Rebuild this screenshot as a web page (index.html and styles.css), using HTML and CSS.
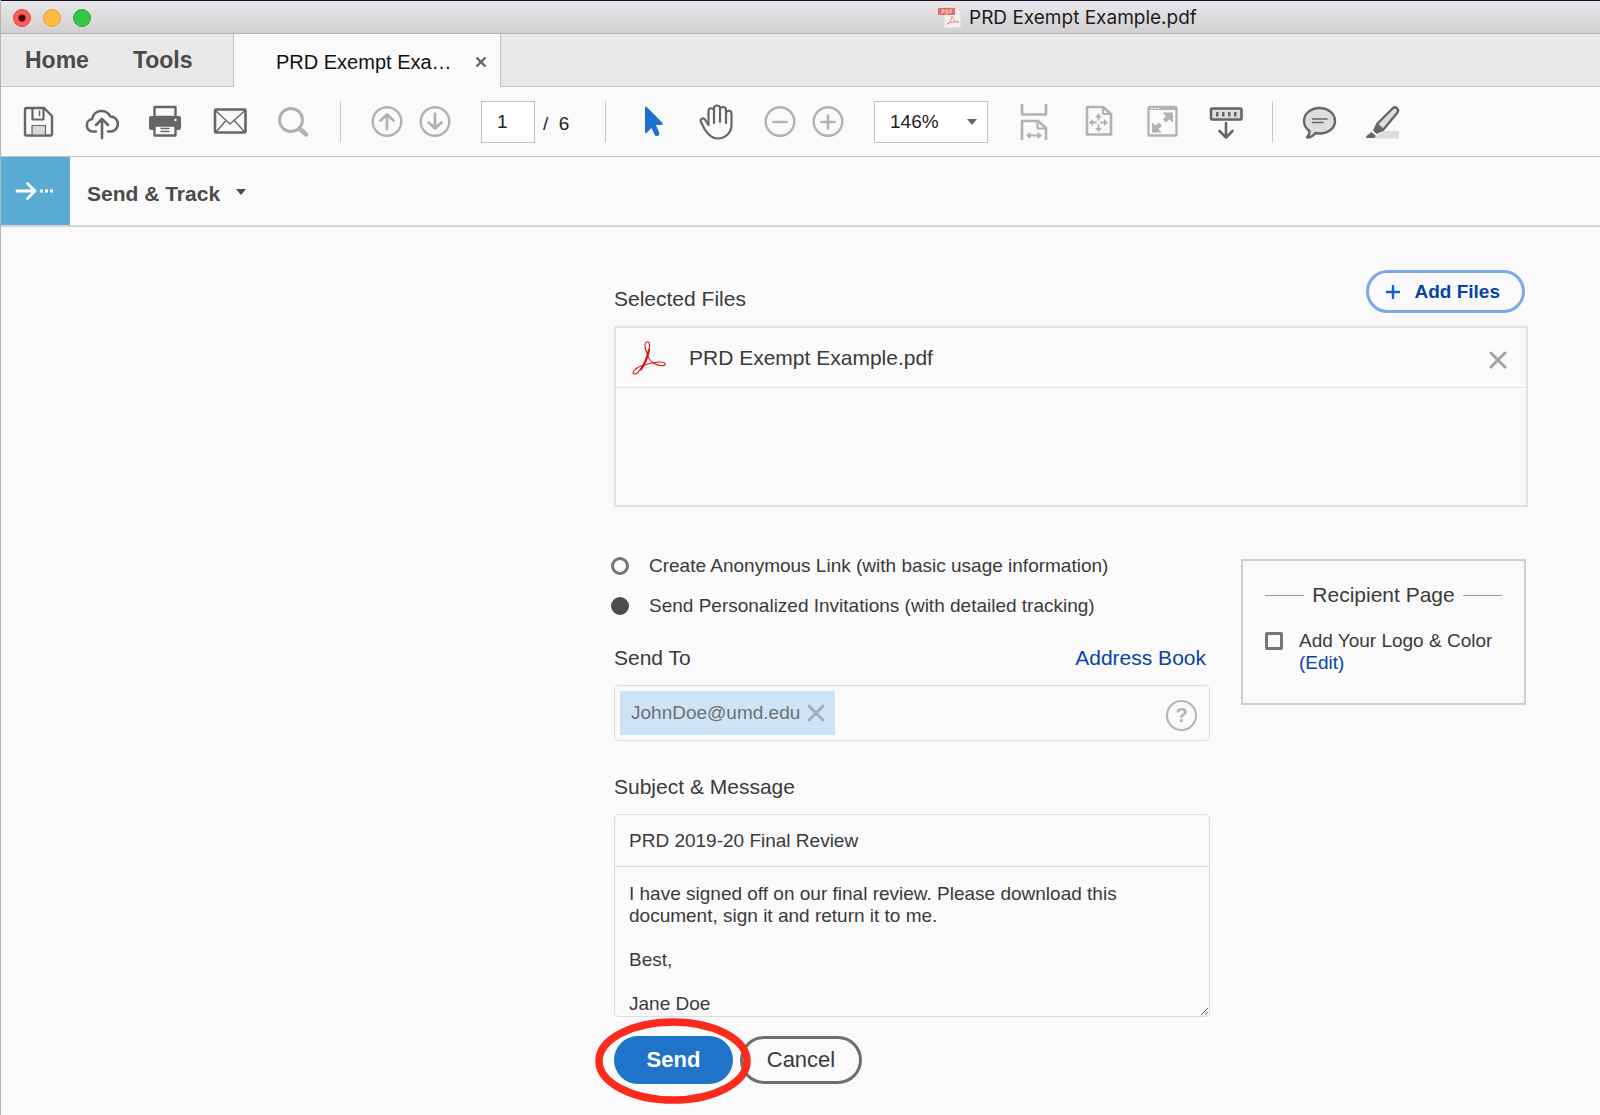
FILE: index.html
```html
<!DOCTYPE html>
<html lang="en">
<head>
<meta charset="utf-8">
<meta name="viewport" content="width=device-width, initial-scale=1">
<title>PRD Exempt Example.pdf</title>
<link rel="stylesheet" href="styles.css">
</head>
<body>
<div class="window">
  <header class="titlebar">
    <div class="lights">
      <button class="light light-close" aria-label="Close window"></button>
      <button class="light light-min" aria-label="Minimize window"></button>
      <button class="light light-max" aria-label="Zoom window"></button>
    </div>
    <div class="doc-title">
      <svg width="24" height="22" viewBox="0 0 24 22" aria-hidden="true">
        <path d="M6 1h12l5 5v15H6z" fill="#f1efef" stroke="#d8d4d4"/>
        <path d="M18 1v5h5" fill="#fff" stroke="#d8d4d4"/>
        <path d="M9 17c3-1 5-5 5-8 2 4 3 6 7 6-4-1-8 0-12 2z" fill="none" stroke="#f08a85"/>
        <rect x="0" y="1" width="17" height="7" fill="#e36b68"/>
        <path d="M4 7V3h2v2H4M8 3v4h1l1-1V4L9 3zM12 7V3h2M12 5h2" fill="none" stroke="#f9d4d2"/>
      </svg>
      <span>PRD Exempt Example.pdf</span>
    </div>
  </header>

  <nav class="tabs">
    <div class="tabs-main">
      <button class="tab-link">Home</button>
      <button class="tab-link">Tools</button>
    </div>
    <div class="tab-active">
      <span>PRD Exempt Exa…</span>
      <button class="bare" aria-label="Close tab">
        <svg width="12" height="12" viewBox="0 0 12 12"><path d="M1.500 1.500l9 9M10.500 1.500l-9 9" stroke="#666" stroke-width="2.400"/></svg>
      </button>
    </div>
    <div class="tabs-rest"></div>
  </nav>

  <div class="toolbar">
    <button class="tool" aria-label="Save"><svg viewBox="0 0 36 36">
      <path d="M6.500 5H24l8 8v18q0 1.500-1.500 1.500h-24Q5 32.500 5 31V6.500Q5 5 6.500 5z" stroke-width="2.400"/>
      <path d="M12.500 5v11.500h11V5" stroke-width="2.200"/><path d="M19.500 8v4.500" stroke-width="1.500"/>
      <path d="M12 32v-9.500h13.500V32z" fill="#d8d8d8" stroke-width="1.200"/></svg></button>
    <button class="tool" aria-label="Upload to cloud"><svg viewBox="0 0 36 36">
      <path d="M12 28.500H9.300A6.300 6.300 0 0 1 8 16 9.700 9.700 0 0 1 26.300 13.500 7.500 7.500 0 0 1 26.500 28.500H24" stroke-width="2.600"/>
      <path d="M18 35V17M12 22l6-6 6 6" stroke-width="2.600"/></svg></button>
    <button class="tool" aria-label="Print"><svg viewBox="0 0 36 36">
      <rect x="1" y="13" width="32" height="14" rx="2" fill="#666" stroke="none"/>
      <path d="M6.500 14V4h21v10z" fill="#fafafa" stroke-width="2.400"/>
      <path d="M6.500 22.500h21v10h-21z" fill="#fafafa" stroke-width="2.400"/>
      <path d="M13 25.500h8M13 28.500h8" stroke-width="1.400"/><circle cx="27.500" cy="17" r="1.200" fill="#fff" stroke="none"/></svg></button>
    <button class="tool" aria-label="Email"><svg viewBox="0 0 36 36">
      <rect x="3" y="6.500" width="30.500" height="23" rx="1" stroke-width="2.600"/>
      <path d="M4 8l14 13L32.500 8M4 29l10-11.500M32.500 29l-10-11.500" stroke-width="1.400"/></svg></button>
    <button class="tool tool-off" aria-label="Search"><svg viewBox="0 0 36 36">
      <circle cx="15" cy="17" r="11.500" stroke-width="3"/><path d="M23.500 25.500l6.500 6" stroke-width="4.500"/></svg></button>
    <span class="sep"></span>
    <div class="pair">
      <button class="tool tool-off" aria-label="Previous page"><svg viewBox="0 0 36 36">
        <circle cx="18" cy="18.500" r="14.300" stroke-width="2.400"/><path d="M18 26V12M11.500 17.500l6.500-6 6.500 6" stroke-width="2.800"/></svg></button>
      <button class="tool tool-off" aria-label="Next page"><svg viewBox="0 0 36 36">
        <circle cx="18" cy="18.500" r="14.300" stroke-width="2.400"/><path d="M18 11V25M11.500 19.500l6.500 6 6.500-6" stroke-width="2.800"/></svg></button>
    </div>
    <label class="pager"><input class="page-input" type="text" value="1" aria-label="Page number"><span class="page-total">/&nbsp; 6</span></label>
    <span class="sep"></span>
    <button class="tool" aria-label="Select"><svg viewBox="0 0 36 36">
      <path d="M11 4.500q.5-1.500 1.800-.5L28.500 20v2H22l3.500 8.500q0 2.500-3 2.500-1.500 0-2-1.500L17.500 25 12.500 30H11z" fill="#1d73cb" stroke="none"/></svg></button>
    <button class="tool" aria-label="Pan"><svg viewBox="0 0 36 36">
      <path d="M10.500 22V8A2.700 2.700 0 0 1 16 8V20M16 8V5.500a3 3 0 0 1 6 0V19M22 7a3 3 0 0 1 6 0V20M28 10.500a2.700 2.700 0 0 1 5.500 0V22C33.500 30 27 35.500 20 35.500S9.500 31 6.500 26L3 19C1.500 16 5 14 7 16.500L10.500 22" stroke-width="2.200"/></svg></button>
    <div class="pair">
      <button class="tool tool-off" aria-label="Zoom out"><svg viewBox="0 0 36 36">
        <circle cx="18" cy="18.500" r="14.300" stroke-width="2.400"/><path d="M11.500 19h13" stroke-width="2.600"/></svg></button>
      <button class="tool tool-off" aria-label="Zoom in"><svg viewBox="0 0 36 36">
        <circle cx="18" cy="18.500" r="14.300" stroke-width="2.400"/><path d="M11.500 19h13M18 12.500v13" stroke-width="2.600"/></svg></button>
    </div>
    <div class="zoom">
      <select class="zoom-select" aria-label="Zoom level"><option>146%</option></select>
      <svg class="zoom-caret" width="10" height="6" viewBox="0 0 10 6" aria-hidden="true"><path d="M0 0h10L5 6z" fill="#666"/></svg>
    </div>
    <button class="tool tool-off" aria-label="Fit width"><svg viewBox="0 0 36 36">
      <path d="M6 1v10.500h24V1M6 37V18h16l8 7v12" stroke-width="2.600" stroke-linecap="butt"/>
      <path d="M21.500 18v7.500H30" stroke-width="2.200"/><path d="M12 32.500h12" stroke-width="1.800"/>
      <path d="M10 32.500l4.500-3.500v7zM26 32.500L21.500 29v7z" fill="#b2b2b2" stroke="none"/></svg></button>
    <button class="tool tool-off" aria-label="Fit page"><svg viewBox="0 0 36 36">
      <path d="M7 4h16l8 7v20.500H7z" stroke-width="2.600"/><path d="M23 4v7h8" stroke-width="2"/>
      <path d="M12 19.500h4M21 19.500h4M18.500 13v4M18.500 22v4" stroke-width="1.800"/>
      <path d="M9 19.500l4-3.500v7zM28 19.500L24 16v7zM18.500 10.500l-3.500 4h7zM18.500 29L15 25h7z" fill="#b2b2b2" stroke="none"/></svg></button>
    <button class="tool tool-off" aria-label="Full screen"><svg viewBox="0 0 36 36">
      <rect x="4.500" y="4" width="28" height="28.500" rx="1" stroke-width="2.400"/><path d="M5 6h27" stroke-width="2"/>
      <path d="M7.500 5.500h1M10.500 5.500h1M13.500 5.500h1" stroke="#fafafa" stroke-width="1"/>
      <path d="M29 9.500v10L25.500 16.500 22 19.500 19 16.500 22 13 18.500 9.500zM8 29.500v-10l3.500 3 3.500-3 3 3-3.500 3.500 3.500 3.500z" fill="#b2b2b2" stroke="none"/></svg></button>
    <button class="tool" aria-label="Show toolbar"><svg viewBox="0 0 36 36">
      <rect x="3" y="5.500" width="30.500" height="11" rx="1" fill="#ddd" stroke-width="2.600"/>
      <path d="M8 9h2.500v4.500H8zM14 9h2.500v4.500H14zM20 9h2.500v4.500H20zM26 9h2.500v4.500H26z" fill="#666" stroke="none"/>
      <path d="M18 20v14M11.500 28l6.500 6.500 6.500-6.500" stroke-width="2.600"/></svg></button>
    <span class="sep"></span>
    <button class="tool" aria-label="Comment"><svg viewBox="0 0 36 36">
      <path d="M18.500 5C27 5 34 10.500 34 18s-7 12.500-15.500 12.500q-2 0-4-.5Q11 34.500 6 34.500 8.500 31.500 8.500 28 3 24 3 18C3 10.500 10 5 18.500 5z" fill="#ddd" stroke-width="2.400"/>
      <path d="M11.500 16h14.500M11.500 19.500h10.500" stroke-width="1.500"/></svg></button>
    <button class="tool" aria-label="Highlight"><svg viewBox="0 0 36 36">
      <path d="M18 28h16v7.500H8z" fill="#ddd" stroke="none"/>
      <path d="M12 21L28 5q2-1.500 4 .3T32.500 9.500L18 27z" fill="#ddd" stroke-width="2.400"/>
      <path d="M11 21l7 7-6.500 3-3.500-3.500zM6.500 29l4.500 4-2 2H1q0-2 1.500-3z" fill="#666" stroke="none"/></svg></button>
  </div>

  <div class="toolhead">
    <div class="toolhead-icon">
      <svg width="38" height="20" viewBox="0 0 38 20" aria-hidden="true">
        <path d="M2 10h17M12.500 2.500L20 10l-7.500 7.500" fill="none" stroke="#fff" stroke-width="2.800" stroke-linecap="round" stroke-linejoin="round"/>
        <path d="M25 8.500h3v3h-3zM30 8.500h3v3h-3zM35 8.500h3v3h-3z" fill="#fff"/></svg>
    </div>
    <button class="toolhead-name">Send &amp; Track
      <svg width="10" height="6" viewBox="0 0 10 6" aria-hidden="true"><path d="M0 0h10L5 6z" fill="#4b4b4b"/></svg>
    </button>
  </div>

  <main class="content">
    <form class="share">
      <div class="files-head">
        <h2 class="label">Selected Files</h2>
        <button type="button" class="add-files">
          <svg width="14" height="14" viewBox="0 0 14 14" aria-hidden="true"><path d="M7 0v14M0 7h14" stroke="#0d66d0" stroke-width="2.400"/></svg>
          Add Files
        </button>
      </div>
      <ul class="files">
        <li class="file">
          <svg width="34" height="34" viewBox="0 0 34 34" aria-hidden="true">
            <path d="M14.500 11C11.500 4 13.500.8 15.500.8S18.500 4 16.500 11C14 20 8 33 2 33-1 32 3 26.500 12 24 20 21.500 31 19.500 33 22.500 34 26 27 25 22 22.500 18 20 15.500 15.500 14.500 11z" fill="none" stroke="#d8131a" stroke-width="1.100"/>
            <path d="M17 8C16.500 15 12 24.500 8.500 29" fill="none" stroke="#d8131a" stroke-width="2.200"/></svg>
          <span class="file-name">PRD Exempt Example.pdf</span>
          <button type="button" class="bare" aria-label="Remove file">
            <svg width="18" height="18" viewBox="0 0 18 18"><path d="M2 2l14 14M16 2L2 16" stroke="#a3a3a3" stroke-width="3" stroke-linecap="round"/></svg>
          </button>
        </li>
      </ul>

      <div class="columns">
        <div class="left">
          <div class="modes">
            <label class="mode"><input class="radio" type="radio" name="mode"> Create Anonymous Link (with basic usage information)</label>
            <label class="mode"><input class="radio" type="radio" name="mode" checked> Send Personalized Invitations (with detailed tracking)</label>
          </div>
          <div class="row-head">
            <label class="label" for="to">Send To</label>
            <a class="link" href="#address-book">Address Book</a>
          </div>
          <div class="to-box">
            <span class="chip">JohnDoe@umd.edu
              <button type="button" class="bare" aria-label="Remove recipient">
                <svg width="18" height="18" viewBox="0 0 18 18"><path d="M2 2l14 14M16 2L2 16" stroke="#9fabb5" stroke-width="2.800" stroke-linecap="round"/></svg>
              </button>
            </span>
            <input class="to-input" id="to" type="text">
            <button type="button" class="help" aria-label="Help">?</button>
          </div>
          <label class="label label-message" for="subject">Subject &amp; Message</label>
          <div class="message-box">
            <input class="subject" id="subject" type="text" value="PRD 2019-20 Final Review">
            <textarea class="message" aria-label="Message">I have signed off on our final review. Please download this document, sign it and return it to me.

Best,

Jane Doe</textarea>
          </div>
          <div class="actions">
            <button type="button" class="btn btn-send">Send</button>
            <button type="button" class="btn btn-cancel">Cancel</button>
            <svg class="ring" width="156" height="86" viewBox="0 0 156 86" aria-hidden="true"><ellipse cx="78" cy="43" rx="74" ry="39" fill="none" stroke="#fb2a1c" stroke-width="7.500"/></svg>
          </div>
        </div>

        <aside class="recipient">
          <h2 class="recipient-title">Recipient Page</h2>
          <div class="logo-row">
            <input class="check" type="checkbox" id="logo">
            <div><label for="logo">Add Your Logo &amp; Color</label><br><a class="link" href="#edit">(Edit)</a></div>
          </div>
        </aside>
      </div>
    </form>
  </main>
</div>
</body>
</html>
```

FILE: styles.css
```css
* { box-sizing: border-box; }

body {
  margin: 0;
  background: #10122a;
  color: #3a3a3a;
  font: 19px/22px "Liberation Sans", Arial, sans-serif;
}

button, input, select, textarea { font: inherit; color: inherit; }
button { padding: 0; border: 0; background: none; }
svg { display: block; flex: none; }

.window {
  display: flex;
  flex-direction: column;
  min-height: 100vh;
  border-left: 1px solid #b4b4b4;
  background: #fafafa;
}

/* Title bar */
.titlebar {
  display: flex;
  align-items: center;
  height: 34px;
  padding: 2px 0 0 12px;
  border-top: 1px solid #10122a;
  border-bottom: 1px solid #b3b1b3;
  background: linear-gradient(#eae7ea, #d1cfd1);
}
.lights { display: flex; gap: 12px; }
.light { width: 18px; height: 18px; border-radius: 50%; }
.light-close { border: 1px solid #e2463f; background: radial-gradient(circle, #4d0000 0 3px, #fc5b57 4px); }
.light-min { border: 1px solid #e0a135; background: #fdbc40; }
.light-max { border: 1px solid #24ae37; background: #33c748; }
.doc-title {
  display: flex;
  align-items: center;
  gap: 7px;
  margin-left: 847px;
  color: #1c1c1c;
  font-family: Inter, sans-serif;
  white-space: nowrap;
}

/* Tabs */
.tabs { display: flex; height: 53px; background: #e9e9e9; }
.tabs-main, .tabs-rest { border-bottom: 1px solid #c2c2c2; }
.tabs-main {
  display: flex;
  align-items: center;
  gap: 44px;
  width: 233px;
  padding-left: 24px;
  border-right: 1px solid #c2c2c2;
}
.tabs-rest { flex: 1; border-left: 1px solid #c2c2c2; }
.tab-link { color: #4b4b4b; font-size: 23px; font-weight: bold; }
.tab-active {
  display: flex;
  align-items: center;
  justify-content: space-between;
  width: 266px;
  padding: 3px 13px 0 42px;
  background: #fafafa;
  color: #111;
  font-size: 20px;
}

/* Toolbar */
.toolbar {
  display: flex;
  align-items: center;
  gap: 28px;
  height: 70px;
  padding-left: 19px;
  border-bottom: 1px solid #c4c4c4;
}
.tool { flex: none; width: 36px; height: 36px; margin-bottom: 2px; }
.tool svg {
  width: 36px;
  height: 36px;
  overflow: visible;
  fill: none;
  stroke: #666;
  stroke-linecap: round;
  stroke-linejoin: round;
}
.tool-off svg { stroke: #b2b2b2; }
.sep { flex: none; width: 1px; height: 41px; background: #c9c9c9; }
.pair { display: flex; gap: 12px; }
.pager { display: flex; align-items: center; gap: 8px; width: 96px; color: #222; white-space: nowrap; }
.page-input {
  width: 54px;
  height: 42px;
  padding: 0 0 0 15px;
  border: 1px solid #c2c2c2;
  background: #fff;
}
.page-total { padding-top: 4px; }
.zoom { position: relative; flex: none; width: 114px; }
.zoom-select {
  display: block;
  width: 100%;
  height: 42px;
  padding: 0 0 0 15px;
  border: 1px solid #c2c2c2;
  border-radius: 0;
  background: #fff;
  color: #222;
  appearance: none;
}
.zoom-caret { position: absolute; top: 18px; right: 11px; pointer-events: none; }

/* Tool header */
.toolhead { display: flex; height: 70px; border-bottom: 2px solid #d2d2d2; }
.toolhead-icon {
  display: flex;
  align-items: center;
  width: 69px;
  padding-left: 14px;
  background: #5aabd4;
}
.toolhead-name {
  display: flex;
  align-items: center;
  gap: 16px;
  padding: 5px 0 0 17px;
  color: #4b4b4b;
  font-size: 21px;
  font-weight: bold;
}
.toolhead-name svg { margin-bottom: 4px; }

/* Form */
.content { padding: 43px 72px 12px 24px; }
.share { max-width: 914px; margin-left: auto; }
.label { margin: 0; font-size: 21px; font-weight: normal; }
.link { color: #0645a6; text-decoration: none; }

.files-head { display: flex; justify-content: space-between; align-items: center; padding-right: 3px; }
.files-head .label { padding-top: 15px; }
.add-files {
  display: flex;
  align-items: center;
  gap: 14px;
  height: 43px;
  padding: 0 22px 0 17px;
  border: 3px solid #78aae8;
  border-radius: 22px;
  color: #0645a6;
  font-weight: bold;
}
.files {
  height: 181px;
  margin: 13px 0 0;
  padding: 0;
  border: 2px solid #e2e2e2;
  list-style: none;
}
.file {
  display: flex;
  align-items: center;
  gap: 23px;
  height: 60px;
  padding: 0 19px 0 16px;
  border-bottom: 1px solid #e4e4e4;
}
.file-name { flex: 1; font-size: 21px; }
.file .bare { padding-top: 4px; }

.columns { display: flex; align-items: flex-start; gap: 31px; padding: 48px 2px 0 0; }
.left { flex: 1; min-width: 0; }

.modes { display: flex; flex-direction: column; gap: 18px; }
.mode { display: flex; align-items: center; gap: 20px; white-space: nowrap; }
.radio, .check { flex: none; appearance: none; width: 18px; height: 18px; margin: 0; border: 3px solid #757575; }
.radio { border-radius: 50%; margin-left: -3px; }
.radio:checked { border-color: #4d4d4d; background: #4d4d4d; }
.check { border-radius: 2px; }

.row-head { display: flex; justify-content: space-between; padding: 30px 4px 16px 0; }
.row-head .link { font-size: 21px; }

.to-box {
  display: flex;
  align-items: center;
  height: 56px;
  padding: 0 12px 0 5px;
  border: 1px solid #dcdcdc;
  border-radius: 5px;
}
.chip {
  display: flex;
  align-items: center;
  gap: 7px;
  height: 44px;
  padding: 0 10px 0 11px;
  background: #cde4f7;
  color: #707070;
}
.to-input { flex: 1; min-width: 0; border: 0; background: none; outline: 0; }
.help {
  width: 31px;
  height: 31px;
  margin-top: 4px;
  border: 2px solid #b3b3b3;
  border-radius: 50%;
  color: #b3b3b3;
  font-size: 20px;
  font-weight: bold;
}

.label-message { display: block; padding: 35px 0 16px; }
.message-box { border: 1px solid #dcdcdc; border-radius: 5px; }
.subject {
  display: block;
  width: 100%;
  height: 52px;
  padding: 0 14px;
  border: 0;
  border-bottom: 1px solid #dcdcdc;
  background: none;
}
.message {
  display: block;
  width: 100%;
  height: 149px;
  padding: 16px 14px 0;
  border: 0;
  background: none;
  overflow: hidden;
  resize: vertical;
}

.actions { position: relative; display: flex; gap: 7px; margin-top: 19px; }
.btn { height: 48px; border-radius: 24px; font-size: 22px; }
.btn-send { width: 119px; background: #1f74c9; color: #fff; font-weight: bold; }
.btn-cancel { width: 122px; border: 3px solid #6e6e6e; }
.ring { position: absolute; top: -18px; left: -19px; pointer-events: none; }

.recipient {
  flex: none;
  width: 285px;
  margin-top: 4px;
  padding: 23px 22px 29px;
  border: 2px solid #cfcfcf;
}
.recipient-title {
  display: flex;
  align-items: center;
  gap: 8px;
  margin: 0;
  font-size: 21px;
  font-weight: normal;
  white-space: nowrap;
}
.recipient-title::before, .recipient-title::after { content: ""; flex: 1; height: 1px; background: #999; }
.logo-row { display: flex; gap: 16px; margin-top: 24px; white-space: nowrap; }
.logo-row .check { margin-top: 2px; }
```
